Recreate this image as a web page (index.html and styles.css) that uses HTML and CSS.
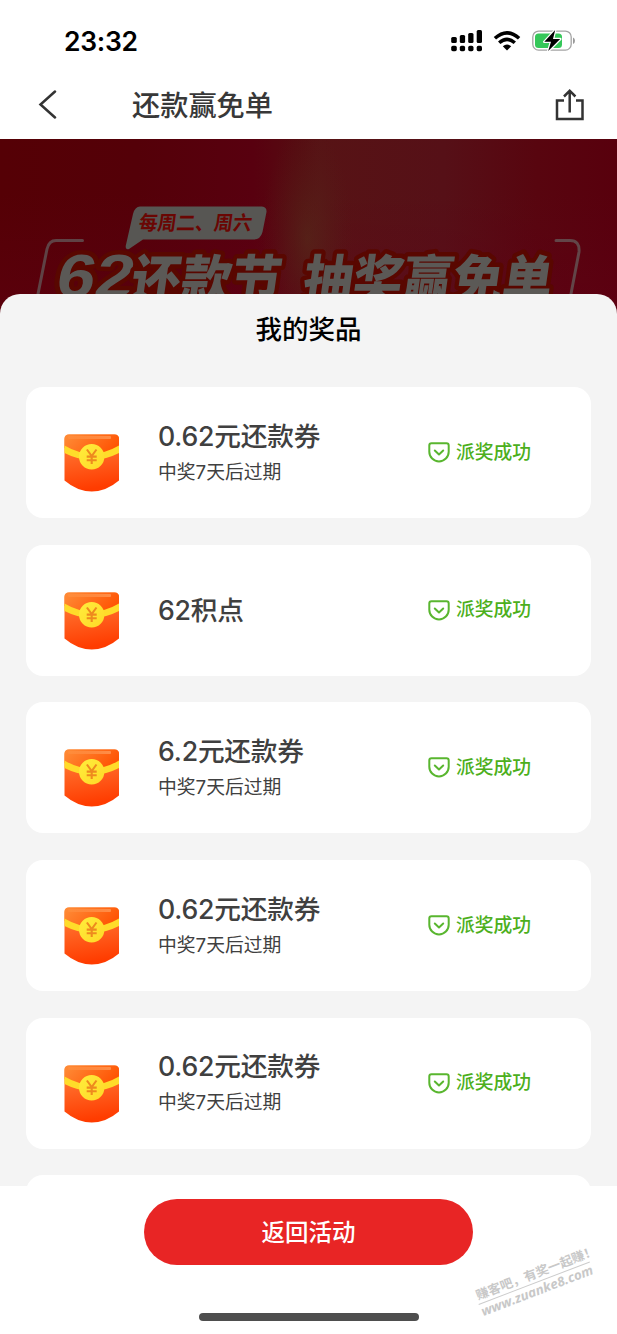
FILE: index.html
```html
<!DOCTYPE html>
<html lang="zh-CN">
<head>
<meta charset="utf-8">
<title>还款赢免单</title>
<link rel="stylesheet" href="styles.css">
</head>
<body>
<svg class="defs" width="0" height="0" aria-hidden="true">
  <defs>
    <linearGradient id="envBody" x1="0" y1="0" x2="0.15" y2="1"><stop offset="0" stop-color="#ff8a35"/><stop offset=".45" stop-color="#ff6423"/><stop offset="1" stop-color="#ff3c00"/></linearGradient>
    <linearGradient id="envFlap" x1="0" y1="0" x2="1" y2="0.4"><stop offset="0" stop-color="#ff8d38"/><stop offset="1" stop-color="#ff5505"/></linearGradient>
    <linearGradient id="envShine" x1="0" y1="0" x2="1" y2="0"><stop offset="0" stop-color="#ffa35c" stop-opacity=".2"/><stop offset="1" stop-color="#ffa060" stop-opacity=".7"/></linearGradient>
    <linearGradient id="coin" x1="0" y1="0" x2="1" y2="1"><stop offset="0" stop-color="#ffed3c"/><stop offset="1" stop-color="#ffd827"/></linearGradient>
    <symbol id="envelope" viewBox="0 0 56 58">
      <path d="M.5 5Q.5.5 5 .5H50.500Q55 .5 55 5V46.500Q42 57.500 27.750 57.500T.5 46.500Z" fill="url(#envBody)"/>
      <path d="M.5 5Q.5.5 5 .5H50.500Q55 .5 55 5V14Q27.700 29 .5 14Z" fill="url(#envFlap)"/>
      <rect x="4" y="2" width="43" height="3" rx="1" fill="url(#envShine)"/>
      <path d="M.5 11.500Q27.700 27.500 55 11.500V19Q27.700 33 .5 19Z" fill="#ffdc2a"/>
      <circle cx="27.700" cy="22.700" r="12.700" fill="url(#coin)"/>
      <path d="M22.900 15.500L27.700 22L32.500 15.500M27.700 21.500V30M22.700 22.600H32.700M22.700 26.300H32.700" fill="none" stroke="#ee8a1e" stroke-width="2.100"/>
    </symbol>
    <symbol id="badge" viewBox="0 0 22 21">
      <path d="M3.500 1.300H18.500Q20.700 1.300 20.700 3.500V9.700A9.700 9.700 0 0 1 1.300 9.700V3.500Q1.300 1.300 3.500 1.300Z" fill="none" stroke="#59b62f" stroke-width="2"/>
      <path d="M6.800 8.500L11 12.400L15.200 8.500" fill="none" stroke="#59b62f" stroke-width="2" stroke-linecap="round" stroke-linejoin="round"/>
    </symbol>
  </defs>
</svg>
<div class="screen">
  <header class="top">
    <div class="statusbar">
      <span class="time">23:32</span>
      <svg class="status-icons" width="126" height="24" viewBox="0 0 126 24">
        <g fill="#000">
          <rect x="1.200" y="8" width="5.600" height="6" rx="1.500"/><rect x="9.800" y="6" width="5.300" height="8" rx="1.500"/><rect x="18.200" y="4" width="5.300" height="10" rx="1.500"/><rect x="26.700" y="1" width="5.300" height="13" rx="1.500"/>
          <rect x="1.200" y="16.700" width="5.600" height="5.600" rx="1.700"/><rect x="9.800" y="16.700" width="5.300" height="5.600" rx="1.700"/><rect x="18.200" y="16.700" width="5.300" height="5.600" rx="1.700"/><rect x="26.700" y="16.700" width="5.300" height="5.600" rx="1.700"/>
          <path d="M57 21.500L52.800 17.300Q57 13.800 61.200 17.300Z"/>
        </g>
        <path d="M44.900 9.300Q57 -1.700 69.100 9.300M49.200 13.800Q57 6.800 64.800 13.800" fill="none" stroke="#000" stroke-width="3.500"/>
        <rect x="82.800" y="2.100" width="38.400" height="19" rx="5.800" fill="#fff" stroke="#a4a4a4" stroke-width="1.300"/>
        <rect x="85" y="4.400" width="27" height="14.500" rx="3.500" fill="#35c759"/>
        <path d="M123 8.500Q125 9.300 125 11.700T123 15Z" fill="#999"/>
        <path d="M105.200 1L94.300 12.800H101L98.200 22L110.200 10H103Z" fill="#000" stroke="#fff" stroke-width="2.500" paint-order="stroke" stroke-linejoin="round"/>
      </svg>
    </div>
    <nav class="navbar">
      <svg class="back" width="20" height="30" viewBox="0 0 20 30"><path d="M17 1.500L2.500 14.500L17 27.500" fill="none" stroke="#333" stroke-width="2.500" stroke-linecap="round"/></svg>
      <h1 class="page-title">还款赢免单</h1>
      <svg class="share" width="30" height="34" viewBox="0 0 30 34"><path d="M10 12.500H3V31H28.500V12.500H22M15.700 24.500V2.500M10 8.500L15.700 2.700L21.400 8.500" fill="none" stroke="#333" stroke-width="2.500"/></svg>
    </nav>
  </header>

  <svg class="banner" width="617" height="180" viewBox="0 0 617 180">
    <defs>
      <linearGradient id="bannerBg" x1="0" y1="0" x2="1" y2="0"><stop offset="0" stop-color="#550005"/><stop offset=".22" stop-color="#540008"/><stop offset=".41" stop-color="#58000f"/><stop offset=".48" stop-color="#560b11"/><stop offset=".52" stop-color="#571315"/><stop offset=".72" stop-color="#561017"/><stop offset=".87" stop-color="#58050f"/><stop offset="1" stop-color="#58000d"/></linearGradient>
      <radialGradient id="bannerGlow" cx=".5" cy=".5" r=".5"><stop offset="0" stop-color="#54301b" stop-opacity=".55"/><stop offset="1" stop-color="#54201a" stop-opacity="0"/></radialGradient>
      <linearGradient id="bannerEdge" x1="0" y1="0" x2="0" y2="1"><stop offset=".3" stop-color="#60001a" stop-opacity="0"/><stop offset="1" stop-color="#66001a" stop-opacity=".35"/></linearGradient>
    </defs>
    <rect width="617" height="180" fill="url(#bannerBg)"/>
    <rect width="617" height="180" fill="url(#bannerEdge)"/>
    <ellipse cx="307" cy="100" rx="46" ry="115" fill="url(#bannerGlow)"/>
    <path d="M82.500 101.500H56Q49 101.500 47 110L36 165" fill="none" stroke="#5f4245" stroke-width="3" stroke-linecap="round"/>
    <path d="M556 101.500H570Q580 101.500 579 113L570 160" fill="none" stroke="#624548" stroke-width="3" stroke-linecap="round"/>
    <path d="M140 67.500H262Q267 68 266.500 73L262.500 93Q260.500 100.500 254 100.500H143L129 110Q125.500 111 125.700 107L133 75Q135 67.500 140 67.500Z" fill="#575653"/>
    <g class="banner-type">
      <text class="slogan" transform="translate(138 91) skewX(-8)" textLength="113" lengthAdjust="spacingAndGlyphs">每周二、周六</text>
      <g class="headline">
        <text class="num" transform="translate(54 158) skewX(-10)" textLength="77" lengthAdjust="spacingAndGlyphs">62</text>
        <text transform="translate(129 160) skewX(-8)" textLength="150" lengthAdjust="spacingAndGlyphs">还款节</text>
        <text transform="translate(301 160) skewX(-8)" textLength="249" lengthAdjust="spacingAndGlyphs">抽奖赢免单</text>
      </g>
    </g>
  </svg>

  <main class="sheet">
    <h2 class="sheet-title">我的奖品</h2>
    <div class="prizes">
      <article class="prize"><svg class="env"><use href="#envelope"/></svg><div class="info"><h3>0.62元还款券</h3><p>中奖7天后过期</p></div><div class="state"><svg class="tick"><use href="#badge"/></svg><span>派奖成功</span></div></article>
      <article class="prize"><svg class="env"><use href="#envelope"/></svg><div class="info"><h3>62积点</h3></div><div class="state"><svg class="tick"><use href="#badge"/></svg><span>派奖成功</span></div></article>
      <article class="prize"><svg class="env"><use href="#envelope"/></svg><div class="info"><h3>6.2元还款券</h3><p>中奖7天后过期</p></div><div class="state"><svg class="tick"><use href="#badge"/></svg><span>派奖成功</span></div></article>
      <article class="prize"><svg class="env"><use href="#envelope"/></svg><div class="info"><h3>0.62元还款券</h3><p>中奖7天后过期</p></div><div class="state"><svg class="tick"><use href="#badge"/></svg><span>派奖成功</span></div></article>
      <article class="prize"><svg class="env"><use href="#envelope"/></svg><div class="info"><h3>0.62元还款券</h3><p>中奖7天后过期</p></div><div class="state"><svg class="tick"><use href="#badge"/></svg><span>派奖成功</span></div></article>
      <article class="prize"></article>
    </div>
  </main>

  <footer class="footer">
    <button class="return" type="button">返回活动</button>
    <div class="home-indicator"></div>
  </footer>

  <svg class="watermark" width="147" height="94" viewBox="0 0 147 94">
    <g transform="translate(8 60) rotate(-21)">
      <text class="mark-cn" x="0" y="0" textLength="128" lengthAdjust="spacingAndGlyphs">赚客吧，有奖一起赚！</text>
      <path d="M-1 4.500H118" stroke="#ccc" stroke-width="1"/>
      <text class="mark-url" x="-1" y="17" textLength="119" lengthAdjust="spacingAndGlyphs">www.zuanke8.com</text>
    </g>
  </svg>
</div>
</body>
</html>
```
FILE: styles.css
```css
* { box-sizing: border-box; }

body {
  margin: 0;
  background: #fff;
  font-family: Inter, "Noto Sans CJK SC", sans-serif;
}

h1, h2, h3, p { margin: 0; }
svg { display: block; flex: none; }
.defs { position: absolute; }

.screen {
  position: relative;
  display: flex;
  flex-direction: column;
  width: 617px;
  height: 1334px;
  overflow: hidden;
}

.top { flex: none; height: 139px; background: #fff; }

.statusbar {
  display: flex;
  justify-content: space-between;
  align-items: center;
  height: 82px;
  padding: 0 41px 0 64px;
}

.time {
  font-size: 26.5px;
  font-weight: 600;
  line-height: 32px;
  letter-spacing: -.3px;
}

.navbar {
  display: flex;
  align-items: center;
  height: 45px;
  padding: 0 33px 0 38px;
}

.page-title {
  flex: 1;
  margin-left: 74px;
  padding-top: 2px;
  color: #383838;
  font-size: 28.2px;
  font-weight: 500;
  line-height: 42px;
}

.banner { overflow: hidden; }

.banner-type {
  font-family: "Noto Sans CJK SC", sans-serif;
  font-weight: 900;
}

.slogan { fill: #6a0603; font-size: 20px; font-weight: 700; }

.headline {
  fill: #5b5956;
  stroke: #590700;
  stroke-width: 9px;
  stroke-linejoin: round;
  paint-order: stroke;
  font-size: 53px;
}

.num { font-family: "Liberation Sans", sans-serif; font-size: 61px; font-weight: 700; }

.sheet {
  z-index: 1;
  display: flex;
  flex: none;
  flex-direction: column;
  height: 892px;
  margin-top: -25px;
  overflow: hidden;
  border-radius: 20px 20px 0 0;
  background: #f4f4f4;
}

.sheet-title {
  flex: none;
  height: 93px;
  padding-top: 15px;
  font-size: 26.5px;
  font-weight: 500;
  line-height: 40px;
  text-align: center;
}

.prizes {
  display: flex;
  flex-direction: column;
  gap: 26.600px;
  padding: 0 26px;
}

.prize {
  display: grid;
  flex: none;
  grid-template-columns: 94px 270px 1fr;
  align-items: center;
  height: 131.100px;
  padding-left: 38px;
  border-radius: 17px;
  background: #fff;
}

.env { width: 56px; height: 58px; margin-top: 21px; }

.info { color: #404040; }

.info h3 {
  font-size: 26.700px;
  font-weight: 500;
  line-height: 38px;
  letter-spacing: -.2px;
}

.info p {
  margin-top: 3px;
  font-size: 18.800px;
  line-height: 28px;
}

.info h3:not(:last-child) { margin-top: -2px; padding-bottom: 1px; }

.state {
  display: flex;
  align-items: center;
  gap: 6px;
  color: #4caf1c;
  font-size: 18.800px;
  font-weight: 500;
  line-height: 28px;
}

.tick { width: 22px; height: 21px; }

.footer {
  display: flex;
  flex: 1;
  flex-direction: column;
  align-items: center;
  padding-top: 13px;
  background: #fff;
}

.return {
  width: 329px;
  height: 66px;
  padding: 0 0 3px;
  border: 0;
  border-radius: 33px;
  background: #e82525;
  color: #fff;
  font-family: inherit;
  font-size: 23.500px;
  font-weight: 500;
}

.home-indicator {
  width: 220px;
  height: 8px;
  margin-top: 48px;
  border-radius: 4px;
  background: #4e4e4e;
}

.watermark {
  position: absolute;
  z-index: 2;
  right: 0;
  bottom: 0;
  overflow: visible;
}

.mark-cn {
  fill: #c8c8c8;
  font-family: "Noto Sans CJK SC", sans-serif;
  font-size: 12.5px;
  font-weight: 700;
}

.mark-url {
  fill: #c8c8c8;
  font-family: "Open Sans", sans-serif;
  font-size: 13px;
  font-style: italic;
  font-weight: 700;
}
```
